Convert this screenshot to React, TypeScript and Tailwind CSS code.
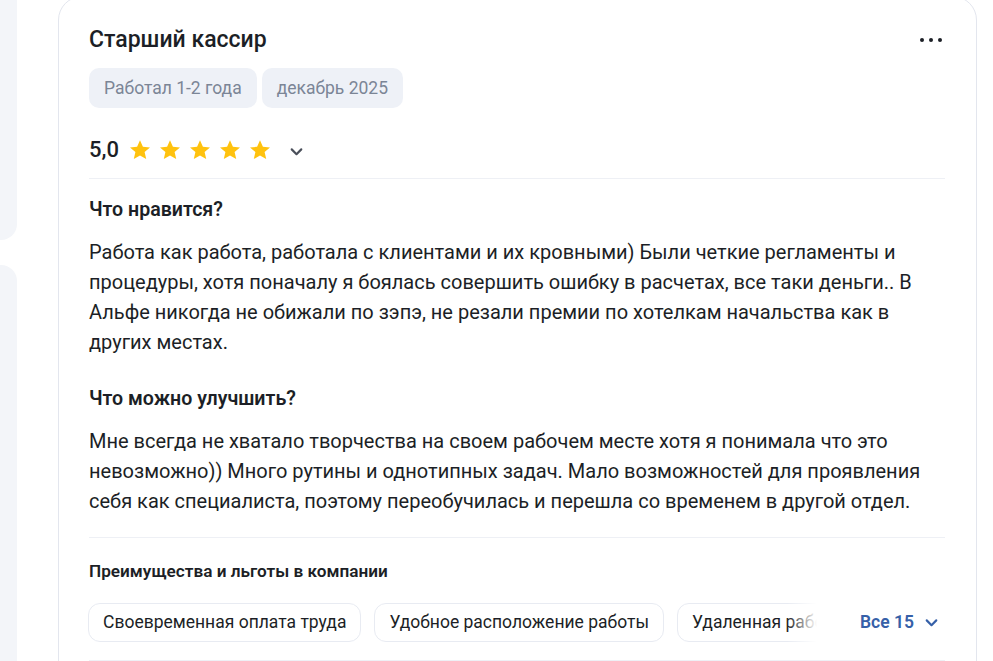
const font = { fontFamily: "Roboto, 'Noto Sans', sans-serif" };

function Star() {
  return (
    <svg width="24" height="24" viewBox="0 0 24 24" className="block">
      <path
        d="M12 2.2l2.9 6.6 7.1.6-5.4 4.7 1.6 7-6.2-3.7-6.2 3.7 1.6-7L2 9.4l7.1-.6z"
        fill="#ffc20e"
      />
    </svg>
  );
}

function Chevron({ color, size = 16 }: { color: string; size?: number }) {
  return (
    <svg width={size} height={size} viewBox="0 0 16 16" fill="none">
      <path d="M3.5 6l4.5 4.5L12.5 6" stroke={color} strokeWidth="2" strokeLinecap="round" strokeLinejoin="round" />
    </svg>
  );
}

const perks = ["Своевременная оплата труда", "Удобное расположение работы", "Удаленная работа", "Гибкий график"];

export default function App() {
  return (
    <div className="w-[993px] h-[661px] overflow-hidden bg-white flex text-[#1c1f26]" style={font}>
      <div className="w-[17px] shrink-0 flex flex-col gap-[25px]">
        <div className="h-[240px] bg-[#f3f5f9] rounded-br-[16px]" />
        <div className="flex-1 bg-[#f3f5f9] rounded-tr-[16px]" />
      </div>

      <div className="ml-[41px] w-[919px] shrink-0 -mt-[4px] self-start border border-[#e3e6ee] rounded-[24px] pl-[30px] pr-[31px] pt-[29px] pb-6">
        <div className="flex items-center justify-between h-[28px]">
          <h2 className="text-[23px] leading-[28px] font-medium">Старший кассир</h2>
          <div className="flex gap-[5px] mr-[3px]">
            <span className="w-[4px] h-[4px] rounded-full bg-[#1c1f26]" />
            <span className="w-[4px] h-[4px] rounded-full bg-[#1c1f26]" />
            <span className="w-[4px] h-[4px] rounded-full bg-[#1c1f26]" />
          </div>
        </div>

        <div className="mt-[14px] flex gap-[5px]">
          <span className="h-[40px] px-[15px] flex items-center rounded-[10px] bg-[#eef1f7] text-[17.5px] text-[#7b8596]">Работал 1-2 года</span>
          <span className="h-[40px] px-[15px] flex items-center rounded-[10px] bg-[#eef1f7] text-[17.5px] text-[#7b8596]">декабрь 2025</span>
        </div>

        <div className="mt-[28px] h-[28px] flex items-center">
          <span className="text-[22px] font-medium leading-[28px] mr-[9px]">5,0</span>
          <div className="flex gap-[6px]">
            <Star />
            <Star />
            <Star />
            <Star />
            <Star />
          </div>
          <span className="ml-[16px] mt-[2px]">
            <Chevron color="#4a4f5a" size={17} />
          </span>
        </div>

        <div className="mt-[14px] h-px bg-[#eef0f5]" />

        <h3 className="mt-[19px] text-[19.6px] leading-[24px] font-semibold">Что нравится?</h3>
        <p className="mt-[15px] text-[20px] leading-[30px]">
          Работа как работа, работала с клиентами и их кровными) Были четкие регламенты и процедуры, хотя поначалу я боялась совершить ошибку в расчетах, все таки деньги.. В Альфе никогда не обижали по зэпэ, не резали премии по хотелкам начальства как в других местах.
        </p>

        <h3 className="mt-[30px] text-[19.6px] leading-[24px] font-semibold">Что можно улучшить?</h3>
        <p className="mt-[15px] text-[20px] leading-[30px]">
          Мне всегда не хватало творчества на своем рабочем месте хотя я понимала что это невозможно)) Много рутины и однотипных задач. Мало возможностей для проявления себя как специалиста, поэтому переобучилась и перешла со временем в другой отдел.
        </p>

        <div className="mt-[21px] h-px bg-[#eef0f5]" />

        <h4 className="mt-[23px] text-[17.2px] leading-[20px] font-semibold">Преимущества и льготы в компании</h4>

        <div className="mt-[22px] flex items-center">
          <div className="relative w-[729px] -ml-px overflow-hidden">
            <div className="flex gap-[13px]">
              {perks.map((p) => (
                <span
                  key={p}
                  className="shrink-0 h-[39px] px-[14px] flex items-center rounded-[12px] border border-[#e8ebf2] text-[17.5px] whitespace-nowrap"
                >
                  {p}
                </span>
              ))}
            </div>
            <div className="absolute right-0 top-0 h-full w-[30px] bg-gradient-to-r from-white/0 to-white" />
          </div>
          <button className="ml-[43px] flex items-center gap-[9px] text-[17.5px] font-semibold text-[#3660a8]">
            Все 15
            <Chevron color="#3660a8" size={17} />
          </button>
        </div>

        <div className="mt-[18px] h-px bg-[#eef0f5]" />
      </div>
    </div>
  );
}
